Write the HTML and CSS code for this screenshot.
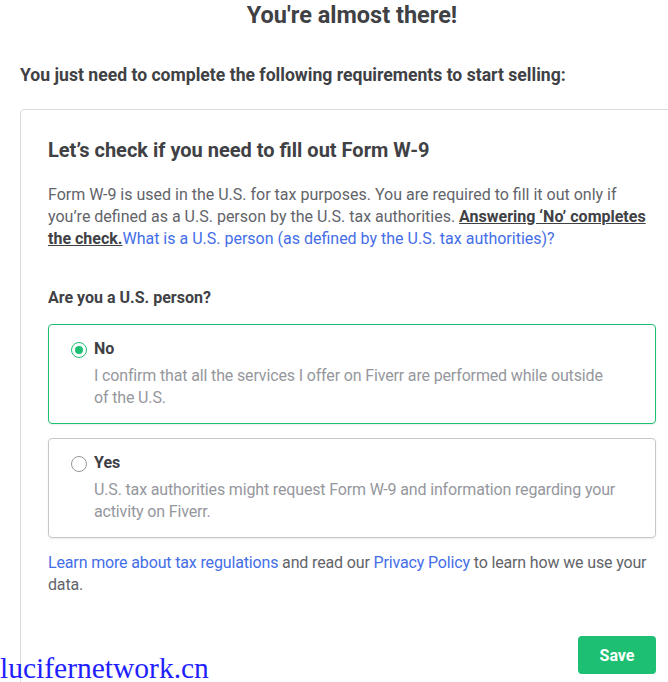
FILE: index.html
```html
<!DOCTYPE html>
<html lang="en">

<head>
    <meta charset="UTF-8">
    <meta name="viewport" content="width=device-width, initial-scale=1.0">
    <title>Requirements</title>
    <link rel="stylesheet" href="styles.css">
</head>

<body>
    <div class="page">
        <h1 class="title">You're almost there!</h1>
        <h2 class="subtitle">You just need to complete the following requirements to start selling:</h2>

        <div class="card">
            <h3 class="card-title">Let’s check if you need to fill out Form W-9</h3>
            <p class="intro">
                Form W-9 is used in the U.S. for tax purposes. You are required to fill it out only if
                you’re defined as a U.S. person by the U.S. tax authorities. <strong class="strong">Answering ‘No’ completes
                the check.</strong><a href="#" class="link">What is a U.S. person (as defined by the U.S. tax authorities)?</a>
            </p>

            <p class="question">Are you a U.S. person?</p>

            <label class="option selected">
                <span class="radio checked"></span>
                <span class="option-text">
                    <span class="option-label">No</span>
                    <span class="option-desc">I confirm that all the services I offer on Fiverr are performed while outside of the U.S.</span>
                </span>
            </label>

            <label class="option">
                <span class="radio"></span>
                <span class="option-text">
                    <span class="option-label">Yes</span>
                    <span class="option-desc">U.S. tax authorities might request Form W-9 and information regarding your activity on Fiverr.</span>
                </span>
            </label>

            <p class="note">
                <a href="#" class="link">Learn more about tax regulations</a> and read our
                <a href="#" class="link">Privacy Policy</a> to learn how we use your data.
            </p>

            <div class="actions">
                <button class="save">Save</button>
            </div>
        </div>
    </div>
    <div class="watermark">lucifernetwork.cn</div>
</body>

</html>
```

FILE: styles.css
```css
body {
    margin: 0;
    background: #fff;
    color: #404145;
    font-family: 'Roboto', 'Liberation Sans', sans-serif;
    overflow: hidden;
}

.page {
    width: 704px;
    padding: 0 20px;
    box-sizing: border-box;
}

.title {
    margin: 0 -20px;
    padding-top: 1px;
    font-size: 23.5px;
    line-height: 28px;
    font-weight: 700;
    text-align: center;
}

.subtitle {
    margin: 35px 0 0;
    font-size: 17.6px;
    line-height: 22px;
    font-weight: 700;
}

.card {
    margin-top: 23px;
    border: 1px solid #dadbdd;
    border-radius: 4px;
    padding: 27px 27px 40px 27px;
}

.card-title {
    margin: 0;
    font-size: 20px;
    line-height: 26px;
    font-weight: 700;
}

.intro {
    margin: 21px 0 0;
    font-size: 16px;
    line-height: 22px;
    color: #62646a;
}

.strong {
    color: #404145;
    text-decoration: underline;
}

.link {
    color: #446ee7;
    text-decoration: none;
}

.question {
    margin: 37px 0 0;
    font-size: 16px;
    line-height: 22px;
    font-weight: 700;
}

.option {
    display: flex;
    gap: 7px;
    margin-top: 15px;
    padding: 14px 22px 14px 22px;
    border: 1px solid #c5c6c9;
    border-radius: 4px;
    box-shadow: 0 1px 2px rgba(0, 0, 0, 0.08);
}

.option + .option {
    margin-top: 14px;
}

.option.selected {
    border-color: #1dbf73;
}

.radio {
    flex: none;
    width: 14px;
    height: 14px;
    margin-top: 3px;
    border: 1px solid #95979d;
    border-radius: 50%;
    position: relative;
}

.radio.checked {
    border-color: #1dbf73;
}

.radio.checked::after {
    content: "";
    position: absolute;
    left: 3px;
    top: 3px;
    width: 8px;
    height: 8px;
    border-radius: 50%;
    background: #1dbf73;
}

.option-text {
    display: flex;
    flex-direction: column;
}

.option-label {
    font-size: 16px;
    line-height: 20px;
    font-weight: 700;
}

.option-desc {
    margin-top: 6px;
    font-size: 16px;
    line-height: 22px;
    color: #95979d;
    padding-right: 16px;
    letter-spacing: -0.15px;
}

.note {
    margin: 14px 0 0;
    font-size: 16px;
    line-height: 22px;
    color: #62646a;
    letter-spacing: -0.15px;
}

.actions {
    display: flex;
    justify-content: flex-end;
    margin-top: 40px;
}

.save {
    width: 78px;
    height: 38px;
    border: none;
    border-radius: 4px;
    background: #1dbf73;
    color: #fff;
    font-family: inherit;
    font-size: 16px;
    font-weight: 700;
}

.watermark {
    position: absolute;
    left: 0;
    top: 652px;
    color: #1f1fff;
    font-family: 'Liberation Serif', serif;
    font-size: 29.5px;
}
```
